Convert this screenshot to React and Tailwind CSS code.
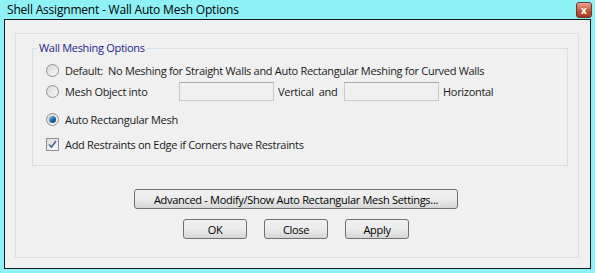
import React from 'react';

const font = { fontFamily: '"Open Sans", "Noto Sans", "Liberation Sans", sans-serif' };

const Radio = ({ checked }) => (
  <span className="relative inline-flex h-[13px] w-[13px] shrink-0 items-center justify-center rounded-full border border-[#8e8f8f] bg-gradient-to-br from-[#d8d8d8] to-[#f8f8f8]">
    {checked && (
      <span className="h-[7px] w-[7px] rounded-full bg-gradient-to-br from-[#8fd4f6] via-[#1f6fb0] to-[#0d3d70]" />
    )}
  </span>
);

const Checkbox = ({ checked }) => (
  <span className="inline-flex h-[13px] w-[13px] shrink-0 items-center justify-center border border-[#8e8f8f] bg-gradient-to-br from-[#dcdcdc] to-[#fafafa]">
    {checked && (
      <svg width="9" height="9" viewBox="0 0 9 9">
        <path d="M1 4.5 L3.5 7 L8 1" fill="none" stroke="#4a5f97" strokeWidth="1.6" />
      </svg>
    )}
  </span>
);

const WinButton = ({ children, className }) => (
  <button
    type="button"
    className={`flex h-[20px] items-center justify-center whitespace-nowrap rounded-[3px] border border-[#707070] bg-gradient-to-b from-[#f2f2f2] via-[#ebebeb] to-[#d6d6d6] text-[11px] leading-none tracking-[-0.3px] text-black ${className}`}
  >
    {children}
  </button>
);

const TextBox = () => (
  <div className="h-[19px] w-[95px] shrink-0 border border-[#c9c9c9] border-t-[#ababab] bg-[#f0f0f0]" />
);

const App = () => {
  return (
    <div className="flex h-[273px] w-[595px] flex-col whitespace-nowrap bg-[#8ef1f6] text-[11px] leading-[13px] tracking-[-0.3px] text-[#1a1a1a]" style={font}>
      {/* Title bar */}
      <div className="flex h-[19px] items-center justify-between pl-[7px] pr-[3px]">
        <span className="text-[12px] leading-none tracking-[-0.2px] text-black">Shell Assignment - Wall Auto Mesh Options</span>
        <span className="mt-[1px] flex h-[16px] w-[16px] items-center justify-center rounded-[3px] border border-[#6b3b2e] bg-gradient-to-b from-[#e8a797] via-[#c95b3f] to-[#a8341c] text-[10px] font-bold leading-none tracking-normal text-white">
          x
        </span>
      </div>

      {/* Client area */}
      <div className="mx-[4px] flex h-[250px] flex-col border border-[#1a1a1a] bg-[#f0f0f0] pb-[10px] pl-[10px] pr-[11px] pt-[13px]">
        <div className="flex flex-1 flex-col border border-[#d5dfe5] pl-[16px] pr-[10px] pt-[14px]">
          {/* Group box */}
          <div className="relative h-[118px] border border-[#d5dfe5] pl-[13px] pt-[15px]">
            <span className="absolute left-[4px] top-[-8px] bg-[#f0f0f0] px-[2px] leading-[14px] text-[#1d1d8c]">
              Wall Meshing Options
            </span>
            <div className="flex flex-col">
              <div className="flex h-[13px] items-center gap-[6px]">
                <Radio />
                <span>Default:&nbsp; No Meshing for Straight Walls and Auto Rectangular Meshing for Curved Walls</span>
              </div>
              <div className="mt-[5px] flex h-[19px] items-center">
                <Radio />
                <span className="ml-[6px] w-[114px]">Mesh Object into</span>
                <TextBox />
                <span className="ml-[4px] w-[66px]">Vertical&nbsp; and</span>
                <TextBox />
                <span className="ml-[4px]">Horizontal</span>
              </div>
              <div className="mt-[12px] flex h-[13px] items-center gap-[6px]">
                <Radio checked />
                <span>Auto Rectangular Mesh</span>
              </div>
              <div className="mt-[12px] flex h-[13px] items-center gap-[6px]">
                <Checkbox checked />
                <span>Add Restraints on Edge if Corners have Restraints</span>
              </div>
            </div>
          </div>

          {/* Buttons */}
          <div className="mt-[23px] flex flex-col items-center pr-[8px]">
            <WinButton className="w-[324px]">Advanced - Modify/Show Auto Rectangular Mesh Settings...</WinButton>
            <div className="mt-[10px] flex gap-[17px]">
              <WinButton className="w-[64px]">OK</WinButton>
              <WinButton className="w-[64px]">Close</WinButton>
              <WinButton className="w-[64px]">Apply</WinButton>
            </div>
          </div>
        </div>
      </div>
    </div>
  );
};

export default App;
